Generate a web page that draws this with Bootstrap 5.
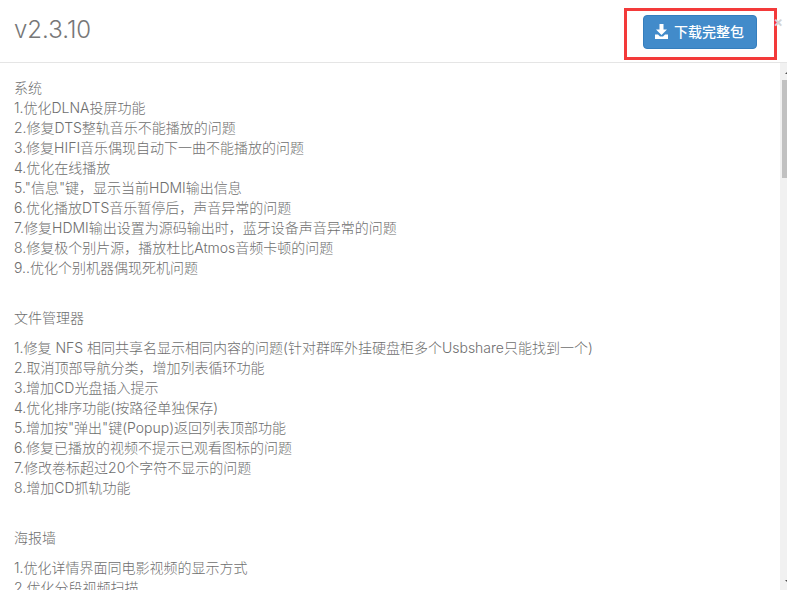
<!DOCTYPE html>
<html lang="zh">
<head>
<meta charset="utf-8">
<title>v2.3.10</title>
<link href="https://cdn.jsdelivr.net/npm/bootstrap@5.3.0/dist/css/bootstrap.min.css" rel="stylesheet">
<style>
html,body{height:590px;overflow:hidden;background:#fff}
body{font-family:"Inter","Noto Sans CJK SC",sans-serif;color:#777}
.dlg-head{height:63px;border-bottom:1px solid #e5e5e5;padding:0 10px 0 14px}
.dlg-title{font-family:"Inter","Noto Sans CJK SC",sans-serif;font-size:24px;font-weight:300;color:#777;margin:0 0 3px;line-height:1}
.dl-frame{border:3px solid #f33a3a;width:153px;height:52px;margin-top:5px;margin-right:0;padding-top:4px;padding-right:1px}
.dl-btn{background:#428bca;border:1px solid #357ebd;border-radius:4px;color:#fff;font-size:14px;font-weight:500;width:114px;height:34px;padding:0 1px 0 0;gap:6px}
.dl-btn:hover{background:#428bca;color:#fff}
.dlg-close{top:15px;right:4px;color:#d4d4d4;font-size:14px;font-weight:700;line-height:1}
.dlg-body{height:527px}
.notes{padding:15px 0 0 14px;font-size:14px;line-height:20px;color:#6e6e6e;font-weight:300}
.notes p{margin:0}
.gap-sm{height:10px}
.gap-lg{height:30px}
.sbar{width:7px;background:#f1f1f1;overflow:hidden}
.sbar-arrow{height:17px;padding-left:5px}
.sbar-thumb{height:98px;width:5px;margin-left:2px;background:#c1c1c1}
.tri-up{width:0;height:0;border-left:4px solid transparent;border-right:4px solid transparent;border-bottom:4px solid #505050;flex:none}
.tri-down{width:0;height:0;border-left:4px solid transparent;border-right:4px solid transparent;border-top:4px solid #505050;flex:none}
</style>
</head>
<body>
<div class="dlg-head d-flex align-items-center justify-content-between position-relative">
  <h4 class="dlg-title">v2.3.10</h4>
  <div class="dl-frame d-flex align-items-start justify-content-center">
    <a class="btn dl-btn d-flex align-items-center justify-content-center" href="#">
      <svg width="13" height="15" viewBox="0 0 13 15" fill="#fff" aria-hidden="true"><path d="M4.5 0h4v5.5H12L6.5 11 1 5.5h3.5zM0 10.5h3l2 2h3l2-2h3V15H0z"/></svg>
      <span>下载完整包</span>
    </a>
  </div>
  <span class="dlg-close position-absolute">×</span>
</div>
<div class="dlg-body d-flex">
  <div class="notes flex-grow-1 overflow-hidden">
    <p>系统</p>
    <p>1.优化DLNA投屏功能</p>
    <p>2.修复DTS整轨音乐不能播放的问题</p>
    <p>3.修复HIFI音乐偶现自动下一曲不能播放的问题</p>
    <p>4.优化在线播放</p>
    <p>5."信息"键，显示当前HDMI输出信息</p>
    <p>6.优化播放DTS音乐暂停后，声音异常的问题</p>
    <p>7.修复HDMI输出设置为源码输出时，蓝牙设备声音异常的问题</p>
    <p>8.修复极个别片源，播放杜比Atmos音频卡顿的问题</p>
    <p>9..优化个别机器偶现死机问题</p>
    <div class="gap-lg"></div>
    <p>文件管理器</p>
    <div class="gap-sm"></div>
    <p>1.修复 NFS 相同共享名显示相同内容的问题(针对群晖外挂硬盘柜多个Usbshare只能找到一个)</p>
    <p>2.取消顶部导航分类，增加列表循环功能</p>
    <p>3.增加CD光盘插入提示</p>
    <p>4.优化排序功能(按路径单独保存)</p>
    <p>5.增加按"弹出"键(Popup)返回列表顶部功能</p>
    <p>6.修复已播放的视频不提示已观看图标的问题</p>
    <p>7.修改卷标超过20个字符不显示的问题</p>
    <p>8.增加CD抓轨功能</p>
    <div class="gap-lg"></div>
    <p>海报墙</p>
    <div class="gap-sm"></div>
    <p>1.优化详情界面同电影视频的显示方式</p>
    <p>2.优化分段视频扫描</p>
  </div>
  <div class="sbar d-flex flex-column flex-shrink-0">
    <div class="sbar-arrow d-flex align-items-center"><div class="tri-up"></div></div>
    <div class="sbar-thumb"></div>
    <div class="flex-grow-1"></div>
    <div class="sbar-arrow d-flex align-items-center"><div class="tri-down"></div></div>
  </div>
</div>
<script src="https://cdn.jsdelivr.net/npm/bootstrap@5.3.0/dist/js/bootstrap.bundle.min.js"></script>
</body>
</html>
